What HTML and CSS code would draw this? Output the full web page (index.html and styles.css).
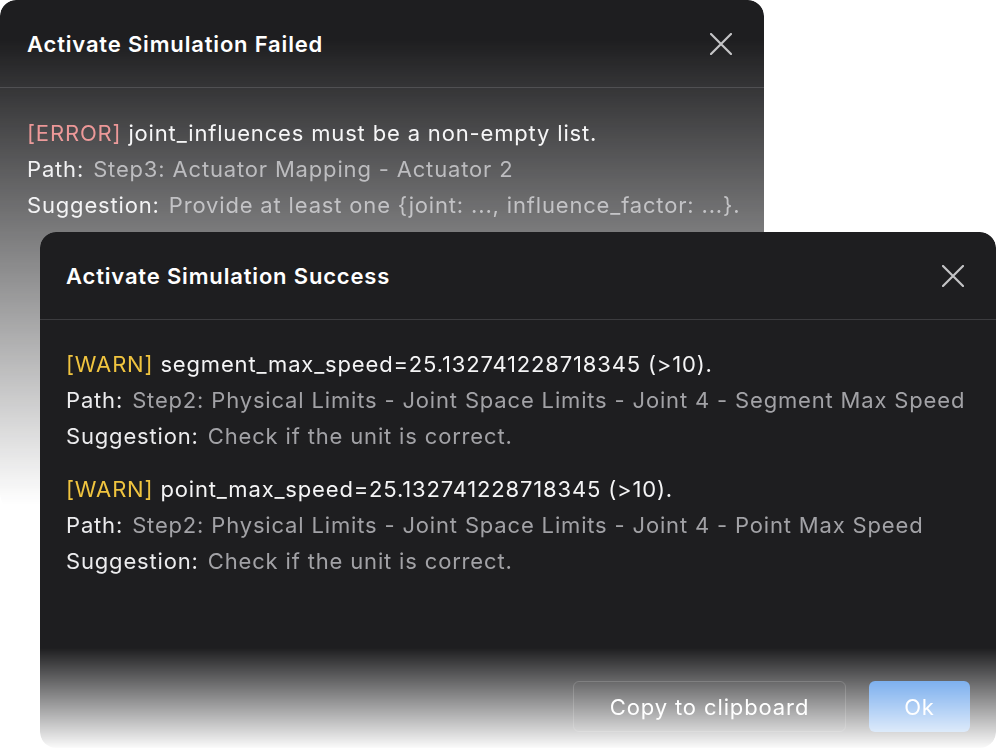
FILE: index.html
```html
<!DOCTYPE html>
<html lang="en">
<head>
<meta charset="utf-8">
<title>Activate Simulation</title>
<link rel="stylesheet" href="styles.css">
</head>
<body>
<div class="stage">
  <section class="dialog dialog-back">
    <header class="dialog-header">
      <h2 class="dialog-title">Activate Simulation Failed</h2>
      <span class="close" aria-label="Close">
        <svg viewBox="0 0 22 22" width="22" height="22"><path d="M1 1 L21 21 M21 1 L1 21" /></svg>
      </span>
    </header>
    <div class="dialog-body">
      <div class="entry">
        <div class="line"><span class="tag tag-error">[ERROR]</span> <span class="msg">joint_influences must be a non-empty list.</span></div>
        <div class="line"><span class="label">Path:</span> <span class="value">Step3: Actuator Mapping - Actuator 2</span></div>
        <div class="line"><span class="label">Suggestion:</span> <span class="value">Provide at least one {joint: ..., influence_factor: ...}.</span></div>
      </div>
    </div>
  </section>

  <section class="dialog dialog-front">
    <header class="dialog-header">
      <h2 class="dialog-title">Activate Simulation Success</h2>
      <span class="close" aria-label="Close">
        <svg viewBox="0 0 22 22" width="22" height="22"><path d="M1 1 L21 21 M21 1 L1 21" /></svg>
      </span>
    </header>
    <div class="dialog-body">
      <div class="entry">
        <div class="line"><span class="tag tag-warn">[WARN]</span> <span class="msg">segment_max_speed=25.132741228718345 (&gt;10).</span></div>
        <div class="line"><span class="label">Path:</span> <span class="value">Step2: Physical Limits - Joint Space Limits - Joint 4 - Segment Max Speed</span></div>
        <div class="line"><span class="label">Suggestion:</span> <span class="value">Check if the unit is correct.</span></div>
      </div>
      <div class="entry">
        <div class="line"><span class="tag tag-warn">[WARN]</span> <span class="msg">point_max_speed=25.132741228718345 (&gt;10).</span></div>
        <div class="line"><span class="label">Path:</span> <span class="value">Step2: Physical Limits - Joint Space Limits - Joint 4 - Point Max Speed</span></div>
        <div class="line"><span class="label">Suggestion:</span> <span class="value">Check if the unit is correct.</span></div>
      </div>
    </div>
    <footer class="dialog-footer">
      <button class="btn btn-secondary">Copy to clipboard</button>
      <button class="btn btn-primary">Ok</button>
    </footer>
  </section>
</div>
</body>
</html>
```

FILE: styles.css
```css
* { box-sizing: border-box; }
html, body {
  margin: 0;
  padding: 0;
  background: #ffffff;
}
body {
  width: 996px;
  height: 750px;
  overflow: hidden;
  font-family: Inter, "Noto Sans", sans-serif;
  letter-spacing: 0.052em;
  -webkit-font-smoothing: antialiased;
}
.stage {
  display: grid;
  grid-template-columns: 996px;
  grid-template-rows: 750px;
}
.dialog {
  grid-area: 1 / 1;
  background: #1e1e20;
  border-radius: 16px;
  color: #ffffff;
  display: flex;
  flex-direction: column;
}
.dialog-back {
  width: 764px;
  height: 510px;
  -webkit-mask-image: linear-gradient(to bottom, #000 40px, rgba(0,0,0,0) 505px);
  mask-image: linear-gradient(to bottom, #000 40px, rgba(0,0,0,0) 505px);
}
.dialog-front {
  margin-top: 232px;
  margin-left: 40px;
  width: 956px;
  height: 516px;
  -webkit-mask-image: linear-gradient(to bottom, #000 416px, rgba(0,0,0,0.02) 516px);
  mask-image: linear-gradient(to bottom, #000 416px, rgba(0,0,0,0.02) 516px);
}
.dialog-header {
  height: 88px;
  flex: none;
  display: flex;
  align-items: center;
  justify-content: space-between;
  padding: 0 32px 0 26px;
  border-bottom: 1px solid #3c3c3f;
}
.dialog-back .dialog-header { padding-left: 27px; }
.dialog-title {
  margin: 0;
  font-size: 22px;
  font-weight: 600;
  line-height: 28px;
  color: #ffffff;
}
.close {
  display: flex;
  width: 22px;
  height: 22px;
}
.close svg path {
  stroke: #c4c4c6;
  stroke-width: 2.2;
  fill: none;
  stroke-linecap: round;
}
.dialog-body {
  flex: 1;
  padding: 26px 26px 0 26px;
  display: flex;
  flex-direction: column;
  gap: 17px;
}
.dialog-back .dialog-body { padding-left: 27px; padding-top: 27px; }
.line {
  font-size: 22px;
  line-height: 36px;
  white-space: nowrap;
}
.tag-error { color: #e87f7f; }
.tag-warn { color: #f0c43f; }
.msg { color: #f4f4f5; }
.label { color: #ececee; margin-right: 2px; }
.value { color: #a2a2a6; }
.dialog-footer {
  flex: none;
  display: flex;
  justify-content: flex-end;
  gap: 23px;
  padding: 0 26px 16px 26px;
}
.btn {
  height: 51px;
  border-radius: 6px;
  font-family: Inter, "Noto Sans", sans-serif;
  font-size: 22px;
  letter-spacing: 0.04em;
  color: #ffffff;
}
.btn-secondary {
  width: 273px;
  background: transparent;
  border: 1.5px solid rgba(255,255,255,0.16);
}
.btn-primary {
  width: 101px;
  background: #3f8ae6;
  border: none;
}
```
